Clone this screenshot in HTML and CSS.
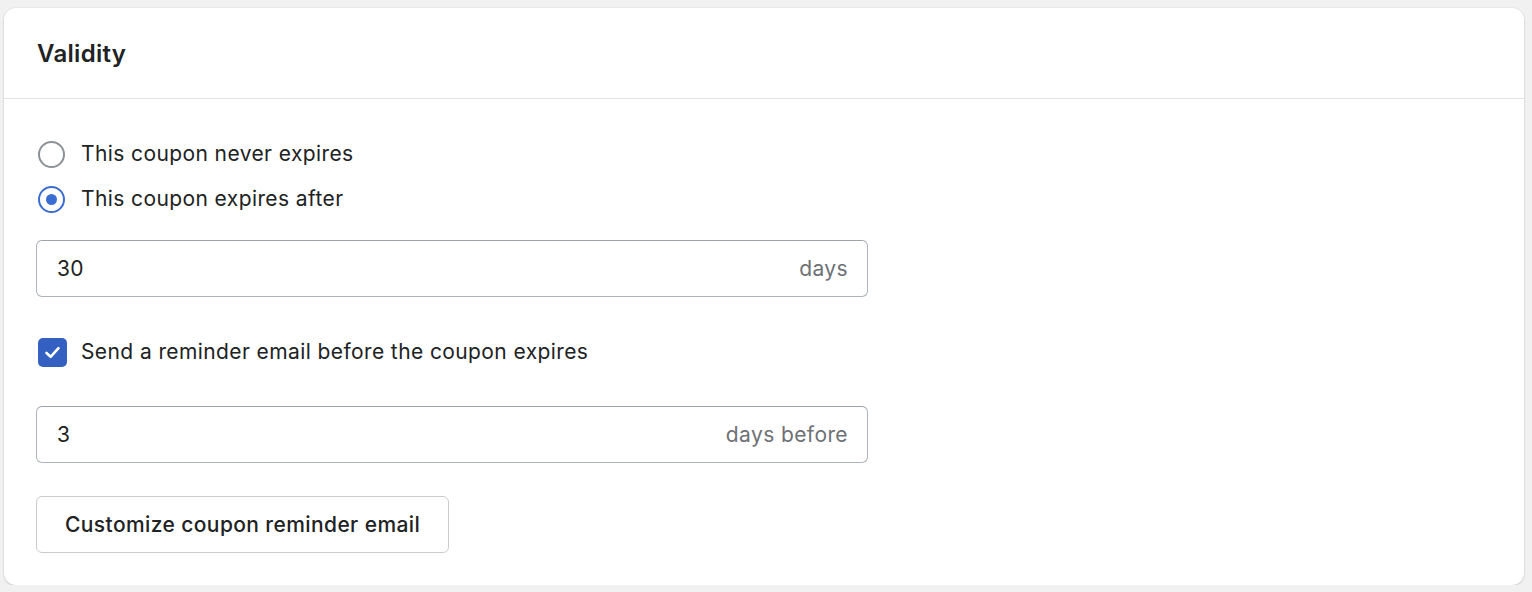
FILE: index.html
```html
<!DOCTYPE html>
<html>
<head>
<meta charset="utf-8">
<link rel="stylesheet" href="styles.css">
</head>
<body>
<div class="card">
  <div class="card-header"><h2 class="title">Validity</h2></div>
  <div class="card-body">
    <div class="radios">
      <label class="radio-row"><span class="radio"></span><span>This coupon never expires</span></label>
      <label class="radio-row"><span class="radio checked"></span><span>This coupon expires after</span></label>
    </div>
    <div class="field field-1"><span class="value">30</span><span class="suffix">days</span></div>
    <label class="check-row"><span class="checkbox"><svg viewBox="0 0 29 29" width="29" height="29"><path d="M8.5 15 L12.6 18.8 L20.5 10.2" fill="none" stroke="#fff" stroke-width="2.6" stroke-linecap="round" stroke-linejoin="round"/></svg></span><span>Send a reminder email before the coupon expires</span></label>
    <div class="field field-2"><span class="value">3</span><span class="suffix">days before</span></div>
    <button class="btn">Customize coupon reminder email</button>
  </div>
</div>
</body>
</html>
```
FILE: styles.css
```css
html, body { margin: 0; padding: 0; }
body {
  background: #f1f1f2;
  font-family: Inter, "Noto Sans", sans-serif;
  color: #202223;
  padding: 8px 8px 0 4px;
}
.card {
  background: #fff;
  border-radius: 12px;
  box-shadow: 0 1px 2px rgba(0,0,0,0.15), 0 0 0 1px rgba(0,0,0,0.03);
  height: 577px;
  box-sizing: border-box;
}
.card-header {
  height: 90px;
  border-bottom: 1px solid #e1e3e5;
  padding: 0 33px;
  display: flex;
  align-items: center;
}
.title {
  margin: 0;
  font-size: 24px;
  font-weight: 600;
  letter-spacing: 0.3px;
}
.card-body {
  padding: 41px 32px 32px 32px;
  font-size: 21px;
  letter-spacing: 0.4px;
}
.radios { display: flex; flex-direction: column; gap: 17px; }
.radio-row, .check-row {
  display: flex;
  align-items: center;
  gap: 16px;
  height: 28px;
  line-height: 28px;
}
.check-row { gap: 14px; }
.radio {
  width: 27px; height: 27px;
  box-sizing: border-box;
  border: 2.5px solid #8c9196;
  border-radius: 50%;
  margin-left: 2px;
  position: relative;
}
.radio.checked { border-color: #3a6dd1; }
.radio.checked::after {
  content: "";
  position: absolute;
  left: 50%; top: 50%;
  width: 11px; height: 11px;
  margin: -5.5px 0 0 -5.5px;
  border-radius: 50%;
  background: #3a6dd1;
}
.field {
  width: 832px;
  height: 57px;
  box-sizing: border-box;
  border: 1px solid #aeb4b9;
  border-top-color: #9ea3a8;
  border-radius: 6px;
  display: flex;
  align-items: center;
  justify-content: space-between;
  padding: 0 19px 0 20px;
}
.field-1 { margin-top: 27px; }
.field-2 { margin-top: 40px; }
.suffix { color: #6d7175; }
.check-row { margin-top: 41px; }
.checkbox {
  width: 29px; height: 29px;
  margin-left: 2px;
  border-radius: 5px;
  background: #3461c1;
  display: flex; align-items: center; justify-content: center;
}
.checkbox svg { display: block; flex: none; }
.btn {
  margin-top: 33px;
  height: 57px;
  padding: 0 28px;
  font: inherit;
  font-size: 21px;
  letter-spacing: 0.4px;
  font-weight: 500;
  color: #202223;
  background: #fff;
  border: 1px solid #c9cccf;
  border-radius: 6px;
}
```
